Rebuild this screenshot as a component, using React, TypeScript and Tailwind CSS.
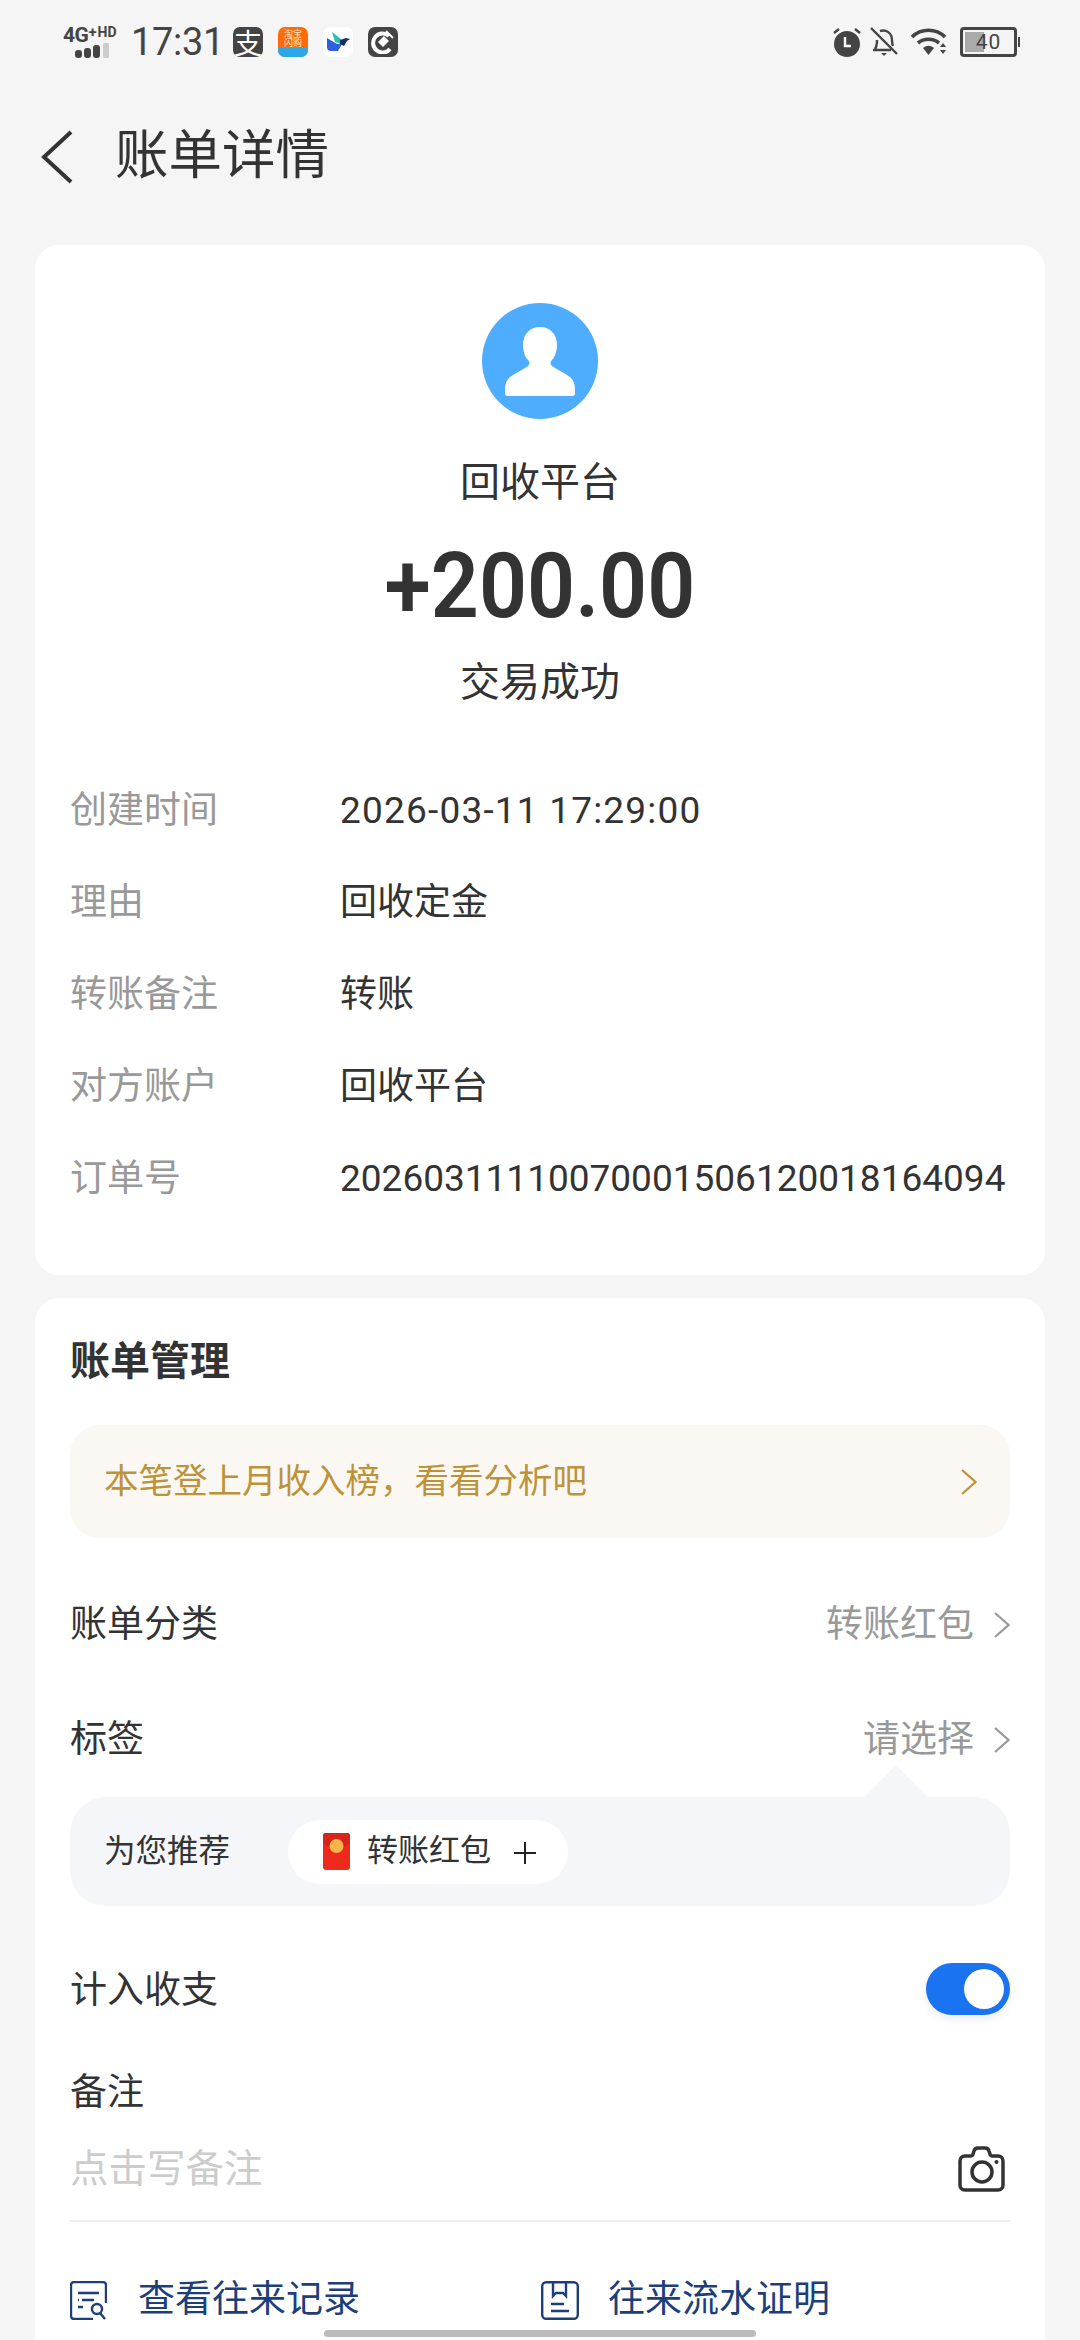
const CJK = "font-['Roboto','Noto_Sans_CJK_SC',sans-serif]"

const Chevron = ({color = '#999'}: {color?: string}) => (
  <svg width="16" height="26" viewBox="0 0 16 26" fill="none">
    <path d="M1 1l13.500 12L1 25" stroke={color} strokeWidth="2.200" />
  </svg>
)

const StatusBar = () => (
  <div className="h-[84px] mb-[-2px] flex items-center relative">
    <div className="ml-[63px] w-[58px] h-[31px] flex flex-col items-end">
      <div className="w-full h-[16px] flex items-start leading-none font-bold text-[#444] font-['Roboto',sans-serif] whitespace-nowrap">
        <span className="text-[21px] leading-[16px] tracking-[-0.5px]">4G</span>
        <span className="text-[15px] leading-[10px]">+</span>
        <span className="ml-[1px] text-[14px] leading-[11px]">HD</span>
      </div>
      <svg width="36" height="15" viewBox="0 0 36 15" className="mr-[11px]">
        <rect x="1" y="7" width="7" height="8" rx="3" fill="#444" />
        <rect x="10" y="5" width="7" height="10" rx="3" fill="#444" />
        <rect x="19" y="2" width="7" height="13" rx="3" fill="#444" />
        <rect x="29" y="0" width="6" height="15" rx="1.500" fill="#ccc" />
      </svg>
    </div>
    <span className="ml-[10px] w-[85px] text-[38px] leading-none tracking-[-0.3px] text-[#444] font-['Roboto',sans-serif]">17:31</span>
    <div className="ml-[17px] w-[30px] h-[30px] rounded-[7px] bg-[#444] flex items-center justify-center text-white text-[28px] leading-none font-['Noto_Sans_CJK_SC',sans-serif]">支</div>
    <div className="ml-[15px] w-[30px] h-[30px] rounded-[7px] overflow-hidden flex flex-col bg-[#ff6a0a]">
      <div className="h-[21px] flex flex-col items-center justify-center text-[9px] leading-[9px] text-[#ffe6c8] font-['Noto_Sans_CJK_SC',sans-serif]">
        <span>淘宝</span>
        <span>闪购</span>
      </div>
      <div className="flex-1 bg-[#2aa9e6]" />
    </div>
    <div className="ml-[15px] w-[30px] h-[30px] rounded-[7px] bg-white flex items-center justify-center">
      <svg width="23" height="20" viewBox="0 0 23 20">
        <path d="M5 0l9 7 0 5-6-2z" fill="#2bbfb0" />
        <path d="M0 6l10 6 5 0-4 7H4C1 19 0 17 0 15z" fill="#2f5fe0" />
        <path d="M13 8l6-2 4 1-3 2-3 5-4-2z" fill="#1b2f66" />
      </svg>
    </div>
    <div className="ml-[15px] w-[30px] h-[30px] rounded-[7px] bg-[#444] flex items-center justify-center">
      <svg width="24" height="24" viewBox="0 0 24 24" fill="none">
        <path d="M18 6a9.500 9.500 0 1 0 1 13" stroke="#fff" strokeWidth="4" />
        <path d="M7 12l6-6 5 5-6 6z" fill="#fff" />
        <path d="M15 1l7 7" stroke="#fff" strokeWidth="2" />
      </svg>
    </div>
    <div className="flex-1" />
    <svg width="30" height="30" viewBox="0 0 30 30" className="mr-[8px]">
      <circle cx="15" cy="17" r="13" fill="#444" />
      <path d="M13 10v9h6" stroke="#fff" strokeWidth="2.400" fill="none" />
      <path d="M2 6l5-4M28 6l-5-4" stroke="#444" strokeWidth="2.400" />
    </svg>
    <svg width="28" height="30" viewBox="0 0 28 30" fill="none" className="mr-[12px]">
      <path d="M5 22c2-3 2-6 2-9M10 4c6-2 12 2 12 9 0 2 0 4 1 6M3 23h18" stroke="#444" strokeWidth="2.400" />
      <path d="M1 1l26 26" stroke="#444" strokeWidth="2.400" />
      <path d="M11 26h6l-3 3z" fill="#444" />
    </svg>
    <svg width="38" height="30" viewBox="0 0 38 30" className="mr-[12px]">
      <path d="M2 10c9-9 24-9 33 0" stroke="#444" strokeWidth="3.600" fill="none" />
      <path d="M8 16c6-5 15-5 21 0" stroke="#444" strokeWidth="3.600" fill="none" />
      <path d="M13 21c4-3 7-3 11 0l-5.500 7z" fill="#444" />
      <path d="M30 20l3-4 3 4zM30 23l3 4 3-4z" fill="#444" />
    </svg>
    <div className="mr-[60px] flex items-center">
      <div className="w-[57px] h-[30px] rounded-[4px] border-[3px] border-[#444] relative flex items-center justify-center overflow-hidden">
        <div className="absolute left-[2px] top-[2px] bottom-[2px] w-[19px] bg-[#aaa]" />
        <span className="relative text-[21px] leading-none text-[#444] font-['Roboto',sans-serif] tracking-[1px]">40</span>
      </div>
      <div className="ml-[1px] w-[2px] h-[10px] bg-[#444]" />
    </div>
  </div>
)

const infoRows = [
  ['创建时间', '2026-03-11 17:29:00', 'tracking-[1.2px]'],
  ['理由', '回收定金', ''],
  ['转账备注', '转账', ''],
  ['对方账户', '回收平台', ''],
  ['订单号', '20260311110070001506120018164094', ''],
]

const SummaryCard = () => (
  <div className="mx-[35px] h-[1030px] bg-white rounded-[24px] pt-[58px] flex flex-col items-center">
    <div className="w-[116px] h-[116px] rounded-full bg-[#4fadff] flex items-center justify-center">
      <svg width="70" height="69" viewBox="0 0 70 69">
        <path
          d="M35 0c10 0 17 7 17 18 0 6-2 12-5 15-2 2-2 4 0 6 5 4 13 7 18 11 3 3 5 6 5 13v3c0 2-1 3-3 3H3c-2 0-3-1-3-3v-3c0-7 2-10 5-13 5-4 13-7 18-11 2-2 2-4 0-6-3-3-5-9-5-15C18 7 25 0 35 0z"
          fill="#fff"
        />
      </svg>
    </div>
    <div className={`mt-[34px] h-[60px] leading-[60px] text-[40px] text-[#333] ${CJK}`}>回收平台</div>
    <div className="mt-[23px] h-[100px] leading-[100px] text-[91px] font-semibold text-[#333] scale-x-[0.925] font-['Roboto',sans-serif]">+200.00</div>
    <div className={`mt-[17px] h-[60px] leading-[60px] text-[40px] text-[#333] ${CJK}`}>交易成功</div>
    <div className="mt-[50px] w-full pl-[35px]">
      {infoRows.map(([label, value, extra]) => (
        <div key={label} className={`h-[92px] pt-[3px] flex items-center text-[37px] ${CJK}`}>
          <span className="w-[270px] text-[#999]">{label}</span>
          <span className={`text-[#333] ${extra}`}>{value}</span>
        </div>
      ))}
    </div>
  </div>
)

const ManageCard = () => (
  <div className={`mt-[23px] mx-[35px] flex-1 bg-white rounded-t-[24px] px-[35px] pt-[39px] ${CJK}`}>
    <div className="h-[50px] leading-[50px] text-[40px] font-bold text-[#333]">账单管理</div>

    <div className="mt-[38px] h-[113px] rounded-[30px] bg-[#fbf8f3] pl-[34px] pr-[33px] flex items-center justify-between">
      <span className="text-[34.5px] text-[#bd9339]">本笔登上月收入榜，看看分析吧</span>
      <Chevron color="#bd9339" />
    </div>

    <div className="mt-[47px] h-[80px] flex items-center justify-between text-[37px]">
      <span className="text-[#333]">账单分类</span>
      <span className="flex items-center gap-[20px] text-[#999]">
        转账红包
        <Chevron />
      </span>
    </div>

    <div className="mt-[35px] h-[80px] flex items-center justify-between text-[37px]">
      <span className="text-[#333]">标签</span>
      <span className="flex items-center gap-[20px] text-[#999]">
        请选择
        <Chevron />
      </span>
    </div>

    <div className="mt-[17px] h-[109px] rounded-[36px] bg-[#f5f6fa] pl-[34px] flex items-center relative">
      <div className="absolute right-[91px] top-[-22px] w-[46px] h-[46px] rotate-45 bg-[#f5f6fa] rounded-[4px]" />
      <span className="w-[184px] text-[31.5px] text-[#333] relative">为您推荐</span>
      <div className="relative w-[280px] h-[64px] rounded-full bg-white flex items-center pl-[35px] text-[31px] text-[#333]">
        <svg width="27" height="37" viewBox="0 0 27 37">
          <rect width="27" height="37" rx="3" fill="#ee2a1c" />
          <path d="M0 3a3 3 0 0 1 3-3h21a3 3 0 0 1 3 3v7c-8 7-19 7-27 0z" fill="#d8241a" />
          <circle cx="13.500" cy="13" r="7" fill="#f9b44e" />
        </svg>
        <span className="ml-[17px]">转账红包</span>
        <svg width="24" height="24" viewBox="0 0 24 24" className="ml-[22px] mt-[2px]">
          <path d="M12 1v22M1 12h22" stroke="#222" strokeWidth="2" />
        </svg>
      </div>
    </div>

    <div className="mt-[53px] h-[60px] flex items-center justify-between text-[37px] text-[#333]">
      <span className="pt-[4px]">计入收支</span>
      <div className="w-[84px] h-[52px] rounded-full bg-[#1a73f0] flex items-center justify-end pr-[6px] shadow-[0_4px_10px_rgba(0,0,0,0.08)]">
        <div className="w-[40px] h-[40px] rounded-full bg-white" />
      </div>
    </div>

    <div className="mt-[49px] h-[50px] leading-[50px] text-[37px] text-[#333]">备注</div>
    <div className="mt-[21px] h-[60px] flex items-center justify-between text-[38.5px] text-[#ccc]">
      <span>点击写备注</span>
      <svg width="47" height="46" viewBox="0 0 47 46" fill="none" className="mr-[5px]">
        <path
          d="M7 10h6c1 0 2-1 2-2l1-3c.5-2 2-3 4-3h7c2 0 3.500 1 4 3l1 3c0 1 1 2 2 2h6c3 0 5 2 5 5v24c0 3-2 5-5 5H7c-3 0-5-2-5-5V15c0-3 2-5 5-5z"
          stroke="#333"
          strokeWidth="3.500"
        />
        <circle cx="24" cy="26" r="10" stroke="#333" strokeWidth="3.500" />
        <circle cx="38.500" cy="16" r="2" fill="#333" />
      </svg>
    </div>
    <div className="mt-[21px] h-[2px] bg-[#eee]" />

    <div className="mt-[53px] h-[50px] flex items-center text-[37px] text-[#1c3f7a]">
      <div className="w-[471px] flex items-center gap-[31px]">
        <svg width="37" height="39" viewBox="0 0 37 39" fill="none">
          <path d="M36 22V4a3 3 0 0 0-3-3H4a3 3 0 0 0-3 3v31a3 3 0 0 0 3 3h19" stroke="#1c3f7a" strokeWidth="2.400" />
          <path d="M8 12h21M12 19h12M8 19h1M8 26h5" stroke="#1c3f7a" strokeWidth="2.600" />
          <circle cx="27" cy="28" r="5" stroke="#1c3f7a" strokeWidth="2.400" />
          <path d="M30 32l5 6" stroke="#1c3f7a" strokeWidth="2.400" />
        </svg>
        <span>查看往来记录</span>
      </div>
      <div className="flex items-center gap-[29px]">
        <svg width="38" height="39" viewBox="0 0 38 39" fill="none">
          <rect x="1.200" y="1.200" width="35.600" height="36.600" rx="4" stroke="#1c3f7a" strokeWidth="2.400" />
          <path d="M12 1v14l3-3h7l3 3V1" stroke="#1c3f7a" strokeWidth="2.400" />
          <path d="M10 23h13M10 30h18" stroke="#1c3f7a" strokeWidth="2.600" />
        </svg>
        <span>往来流水证明</span>
      </div>
    </div>
  </div>
)

const App = () => (
  <div className="w-[1080px] h-[2340px] bg-[#f5f5f5] overflow-hidden flex flex-col relative">
    <StatusBar />
    <div className="h-[146px] mb-[17px] flex items-center pl-[41px]">
      <svg width="32" height="54" viewBox="0 0 32 54" fill="none" className="mt-[3px]">
        <path d="M30 2L3 27l27 25" stroke="#333" strokeWidth="4" />
      </svg>
      <span className={`ml-[42px] pt-[3px] text-[53.5px] text-[#333] ${CJK}`}>账单详情</span>
    </div>
    <SummaryCard />
    <ManageCard />
    <div className="absolute left-[324px] bottom-[3px] w-[432px] h-[7px] rounded-full bg-[#bbb]" />
  </div>
)

export default App
